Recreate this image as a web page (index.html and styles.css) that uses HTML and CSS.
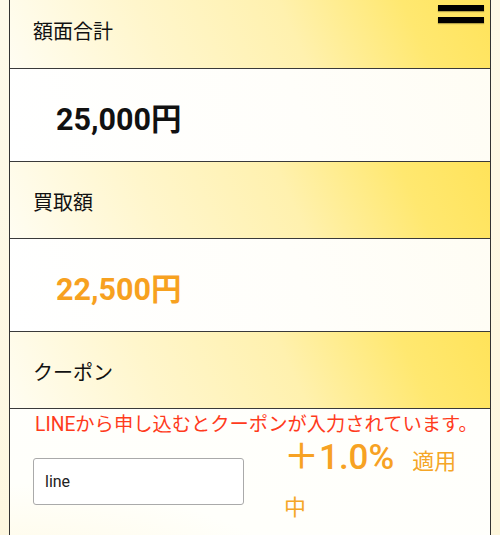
FILE: index.html
```html
<!DOCTYPE html>
<html lang="ja">
<head>
<meta charset="utf-8">
<title>買取金額</title>
<link rel="stylesheet" href="styles.css">
</head>
<body>
<div class="page">
  <div class="table">
    <div class="head head-first">額面合計</div>
    <div class="value">25,000円</div>
    <div class="head">買取額</div>
    <div class="value value-buy">22,500円</div>
    <div class="head">クーポン</div>
    <div class="coupon">
      <p class="notice">LINEから申し込むとクーポンが入力されています。</p>
      <div class="coupon-row">
        <input class="coupon-input" type="text" value="line">
        <p class="rate">＋1.0%<span class="rate-note rate-gap">適用</span><span class="rate-note">中</span></p>
      </div>
    </div>
  </div>
</div>
<button class="menu" aria-label="メニュー"><span class="bar"></span><span class="bar"></span></button>
</body>
</html>
```
FILE: styles.css
```css
html, body {
  margin: 0;
  padding: 0;
  height: 100%;
  overflow: hidden;
}
body {
  background: linear-gradient(160deg, #fefaea 0%, #fdf6dc 100%);
  font-family: "Noto Sans CJK JP", "Roboto", sans-serif;
  color: #111;
}
.page {
  padding: 0 9px;
}
.table {
  border-left: 1px solid #333;
  border-right: 1px solid #333;
  background: #fffffc;
}
.head {
  box-sizing: border-box;
  height: 77px;
  border-bottom: 1px solid #3a3a3a;
  display: flex;
  align-items: center;
  padding: 2px 0 0 23px;
  font-size: 20px;
  background: linear-gradient(65deg, #fffdf2 0%, #fff6cc 30%, #fff1ae 58%, #ffe870 82%, #ffe35a 100%);
}
.head-first {
  margin-top: -9px;
  height: 78px;
}
.value {
  box-sizing: border-box;
  height: 93px;
  border-bottom: 1px solid #3a3a3a;
  display: flex;
  align-items: center;
  padding: 3px 0 0 46px;
  font-family: "Roboto", "Noto Sans CJK JP", sans-serif;
  font-weight: 700;
  font-size: 30.5px;
  color: #111;
  background: linear-gradient(70deg, #ffffff 0%, #fffefa 60%, #fffdf4 100%);
}
.value-buy {
  color: #f7a11f;
}
.coupon {
  padding: 4px 20px 0 23px;
  height: 200px;
  background: radial-gradient(ellipse at 0% 100%, #fff8dc 0%, #fffffb 45%, #fffffc 100%);
}
.notice {
  margin: 0 0 0 2px;
  font-family: "Roboto", "Noto Sans CJK JP", sans-serif;
  font-size: 19.3px;
  line-height: 24px;
  color: #ff3b1c;
  white-space: nowrap;
}
.coupon-row {
  display: flex;
  align-items: center;
  gap: 40px;
  margin-top: -2px;
}
.coupon-input {
  box-sizing: border-box;
  width: 211px;
  height: 47px;
  border: 1px solid #aaa;
  border-radius: 3px;
  padding: 0 11px;
  font-family: "Roboto", "Noto Sans CJK JP", sans-serif;
  font-size: 16px;
  color: #222;
  background: #fff;
  flex: none;
}
.rate {
  margin: 0;
  flex: 1;
  font-family: "Roboto", "Noto Sans CJK JP", sans-serif;
  font-weight: 500;
  font-size: 35px;
  line-height: 46px;
  color: #f7a223;
}
.rate-note {
  font-family: "Noto Sans CJK JP", sans-serif;
  font-weight: 400;
  font-size: 22px;
  line-height: 20px;
  color: #f5a627;
}
.rate-gap {
  margin-left: 18px;
}
.menu {
  position: fixed;
  top: 5px;
  right: 16px;
  width: 46px;
  padding: 0;
  border: 0;
  background: none;
  display: flex;
  flex-direction: column;
  gap: 6px;
}
.bar {
  display: block;
  height: 6px;
  background: #000;
  box-shadow: 0 1px 1px rgba(0,0,0,0.3);
}
```
